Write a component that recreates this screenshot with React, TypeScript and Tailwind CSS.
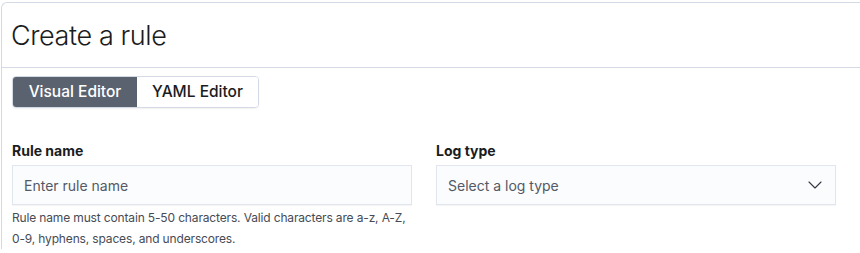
import { ChevronDown } from "lucide-react";

export default function App() {
  return (
    <div className="min-h-[253px] bg-white pl-px pt-[2px] font-['Inter','Liberation_Sans',sans-serif] text-[#1a1c21]">
      <div className="w-[900px] rounded-tl-[6px] border-l border-t border-[#d3dae6] bg-white">
        {/* header */}
        <div className="flex h-[65px] items-center border-b border-[#d3dae6] px-[9px]">
          <h1 className="text-[27px] font-light leading-none tracking-[-0.4px]">Create a rule</h1>
        </div>

        <div className="px-[10px] pt-[8px]">
          {/* editor toggle */}
          <div className="inline-flex h-[32px] overflow-hidden rounded-[4px] border border-[#d3dae6] text-[15.5px] font-medium shadow-[0_1px_2px_rgba(0,0,0,0.06)]">
            <button className="flex w-[124px] items-center justify-center bg-[#5a6270] text-white">Visual Editor</button>
            <button className="flex w-[121px] items-center justify-center bg-white text-[#1a1c21]">YAML Editor</button>
          </div>

          {/* form row */}
          <div className="mt-[34px] flex gap-[24px]">
            <div className="w-[400px]">
              <label className="block text-[14px] font-bold leading-[17px]">Rule name</label>
              <div className="mt-[6px] flex h-[40px] items-center border border-[#e0e5ee] bg-[#fbfcfd] px-[11px] text-[14px] text-[#535966] shadow-[0_1px_1px_rgba(0,0,0,0.04)]">
                Enter rule name
              </div>
              <p className="mt-[2px] whitespace-nowrap text-[12px] leading-[21px] tracking-[-0.15px] text-[#464b55]">
                Rule name must contain 5-50 characters. Valid characters are a-z, A-Z,
                <br />
                0-9, hyphens, spaces, and underscores.
              </p>
            </div>
            <div className="w-[400px]">
              <label className="block text-[14px] font-bold leading-[17px]">Log type</label>
              <div className="mt-[6px] flex h-[40px] items-center justify-between border border-[#e0e5ee] bg-[#fbfcfd] pl-[11px] pr-[8px] text-[14px] text-[#535966] shadow-[0_1px_1px_rgba(0,0,0,0.04)]">
                <span>Select a log type</span>
                <ChevronDown className="h-[24px] w-[24px] text-[#343741]" strokeWidth={1.1} />
              </div>
            </div>
          </div>
        </div>
      </div>
    </div>
  );
}
